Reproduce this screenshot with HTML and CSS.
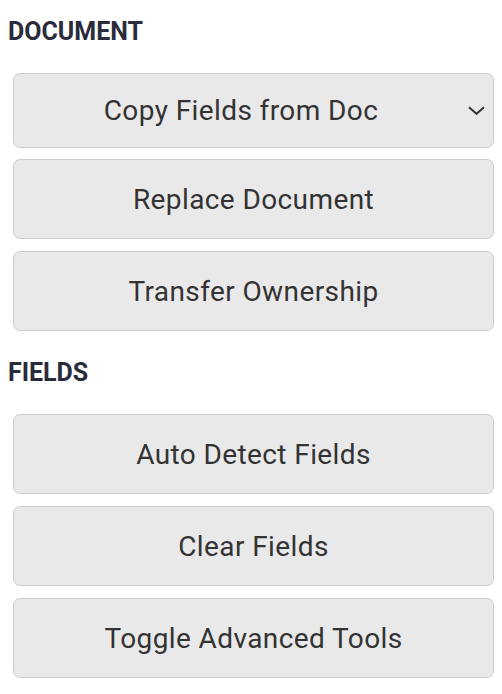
FILE: index.html
```html
<!DOCTYPE html>
<html lang="en">
<head>
<meta charset="utf-8">
<title>Document tools</title>
<link rel="stylesheet" href="styles.css">
</head>
<body>
<div class="panel">
  <section class="group">
    <h2 class="group-title">DOCUMENT</h2>
    <div class="actions">
      <button class="action action-select" type="button">
        <span class="action-label">Copy Fields from Doc</span>
        <svg class="chevron" width="17" height="9" viewBox="0 0 17 9" aria-hidden="true"><path d="M1 1.2 L8.5 7.8 L16 1.2" fill="none" stroke="#333" stroke-width="2" stroke-linecap="butt" stroke-linejoin="miter"/></svg>
      </button>
      <button class="action" type="button">Replace Document</button>
      <button class="action" type="button">Transfer Ownership</button>
    </div>
  </section>
  <section class="group group-next">
    <h2 class="group-title">FIELDS</h2>
    <div class="actions">
      <button class="action" type="button">Auto Detect Fields</button>
      <button class="action" type="button">Clear Fields</button>
      <button class="action" type="button">Toggle Advanced Tools</button>
    </div>
  </section>
</div>
</body>
</html>
```
FILE: styles.css
```css
html, body {
  margin: 0;
  padding: 0;
  background: #ffffff;
}

body {
  font-family: Roboto, "Liberation Sans", Arial, sans-serif;
}

.panel {
  padding: 17px 8px 0 8px;
}

.group-title {
  margin: 0 0 26px 0;
  font-size: 25px;
  line-height: 30px;
  font-weight: 700;
  color: #2a2b3b;
}

.group-next {
  margin-top: 27px;
}

.actions {
  display: flex;
  flex-direction: column;
  gap: 12px;
  margin-left: 5px;
}

.action {
  display: flex;
  align-items: center;
  justify-content: center;
  box-sizing: border-box;
  width: 100%;
  height: 80px;
  margin: 0;
  padding: 0;
  background: #e9e9ea;
  border: 1px solid #cdcdcd;
  border-radius: 7px;
  font-family: Roboto, "Liberation Sans", Arial, sans-serif;
  font-size: 28px;
  letter-spacing: 0.4px;
  font-weight: 400;
  color: #333333;
  cursor: pointer;
}

.action-select {
  height: 75px;
  margin-bottom: -1px;
  padding-right: 8px;
}

.action-label {
  flex: 1;
  text-align: center;
}

.chevron {
  flex: none;
  display: block;
}
```
